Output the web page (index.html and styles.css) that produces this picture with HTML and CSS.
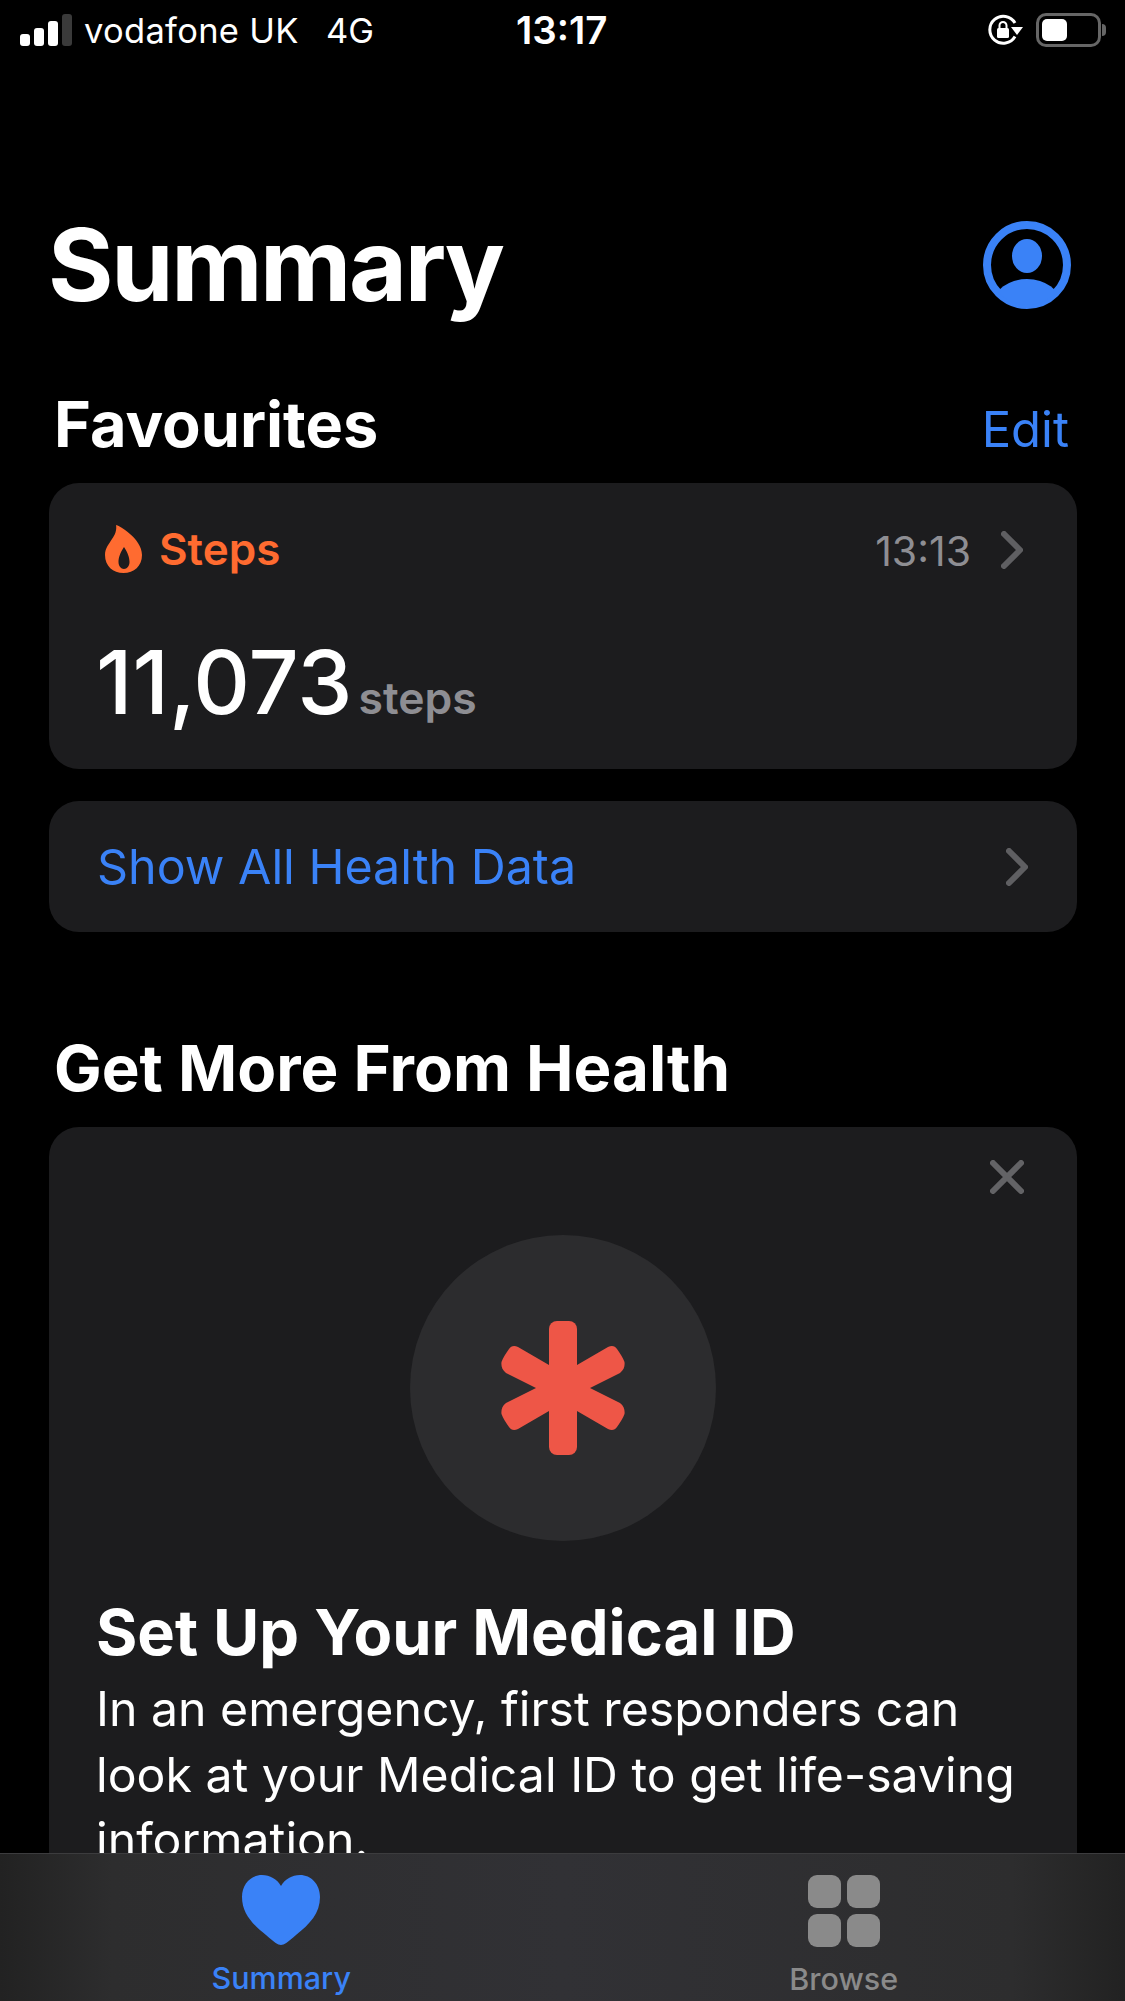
FILE: index.html
```html
<!DOCTYPE html>
<html lang="en">
<head>
  <meta charset="UTF-8" />
  <title>Summary</title>
  <link rel="stylesheet" href="styles.css">
</head>
<body>

<div class="screen">
  <div class="status">
    <div class="signal"><i></i><i></i><i></i><i class="off"></i></div>
    <span class="carrier">vodafone UK</span>
    <span class="network">4G</span>
    <span class="clock">13:17</span>
    <svg class="lock" width="36" height="34" viewBox="0 0 36 34">
      <path d="M27 23.5A13.5 13.5 0 1 1 27 10" fill="none" stroke="#fff" stroke-width="3"/>
      <path d="M23 14h12l-6 8z" fill="#fff"/>
      <rect x="9" y="15" width="12" height="10" rx="1.5" fill="#fff"/>
      <path d="M11.5 15v-2.5a3.5 3.5 0 0 1 7 0V15" fill="none" stroke="#fff" stroke-width="2"/>
    </svg>
    <div class="battery"><div class="level"></div></div>
    <div class="nub"></div>
  </div>

  <div class="content">
    <div class="title-row">
      <h1>Summary</h1>
      <svg width="88" height="88" viewBox="0 0 88 88">
        <defs><clipPath id="ring"><circle cx="44" cy="44" r="40"/></clipPath></defs>
        <circle cx="44" cy="44" r="40" fill="none" stroke="#3a82f7" stroke-width="8"/>
        <ellipse cx="44" cy="35" rx="15" ry="17" fill="#3a82f7"/>
        <ellipse cx="44" cy="84" rx="34" ry="26" fill="#3a82f7" clip-path="url(#ring)"/>
      </svg>
    </div>

    <div class="section-row">
      <h2>Favourites</h2>
      <span class="edit">Edit</span>
    </div>

    <div class="card steps-card">
      <div class="steps-head">
        <svg class="flame" width="37" height="48" viewBox="0 0 37 48">
          <path fill-rule="evenodd" fill="#ff6b30" d="M11 0C13 0 37 13 37 30C37 41 29 48 18.500 48C8 48 0 41 0 30C0 23 4 19 7 14C10 10 12 5 11 0ZM19 22C15 28 13.500 33 13.500 37C13.500 41 16 44 19 44C22 44 24.500 41 24.500 37C24.500 33 23 28 19 22Z"/>
        </svg>
        <span class="steps-name">Steps</span>
        <span class="steps-time">13:13</span>
        <svg class="chev" width="22" height="38" viewBox="0 0 22 38"><path d="M3 3L19 19L3 35"/></svg>
      </div>
      <div class="steps-value">11,073<span>steps</span></div>
    </div>

    <div class="card all-data">
      <span>Show All Health Data</span>
      <svg class="chev" width="22" height="38" viewBox="0 0 22 38"><path d="M3 3L19 19L3 35"/></svg>
    </div>

    <h2 class="more">Get More From Health</h2>

    <div class="card promo">
      <div class="promo-close">
        <svg width="34" height="34" viewBox="0 0 34 34"><path d="M3 3L31 31M31 3L3 31"/></svg>
      </div>
      <div class="promo-badge">
        <svg width="130" height="134" viewBox="0 0 130 134">
          <rect x="51" y="0" width="28" height="134" rx="8" fill="#ee5647"/>
          <path fill="#ee5647" d="M51 44L20 26C16 24 13 25 11 28C8 32 5 37 3.5 41C3 45 4 49 8 52L38 67L8 82C4 85 3 89 3.5 93C5 97 8 102 11 106C13 109 16 110 20 108L51 90H79L110 108C114 110 117 109 119 106C122 102 125 97 126.5 93C127 89 126 85 122 82L92 67L122 52C126 49 127 45 126.5 41C125 37 122 32 119 28C117 25 114 24 110 26L79 44Z"/>
        </svg>
      </div>
      <h3>Set Up Your Medical ID</h3>
      <p>In an emergency, first responders can look at your Medical ID to get life-saving information.</p>
    </div>
  </div>

  <div class="tabbar">
    <div class="tab active">
      <svg width="78" height="70" viewBox="0 0 78 70">
        <path fill="#3a82f7" d="M39 70C36 70 32 67 24 60C10 49 0 38 0 22C0 9 9 0 20 0C28 0 35 4 39 11C43 4 50 0 58 0C69 0 78 9 78 22C78 38 68 49 54 60C46 67 42 70 39 70Z"/>
      </svg>
      <span>Summary</span>
    </div>
    <div class="tab">
      <div class="tiles"><i></i><i></i><i></i><i></i></div>
      <span>Browse</span>
    </div>
  </div>
</div>

</body>
</html>
```

FILE: styles.css
```css
* {
  box-sizing: border-box;
}
body {
  margin: 0;
  background: #000;
  color: #fff;
  font-family: Inter, "Noto Sans", sans-serif;
}
.screen {
  width: 1125px;
  height: 2001px;
  display: flex;
  flex-direction: column;
  overflow: hidden;
}

/* status bar */
.status {
  height: 60px;
  flex: none;
  display: flex;
  align-items: center;
  padding-left: 20px;
  font-size: 34.5px;
}
.signal {
  display: flex;
  align-items: flex-end;
  gap: 4px;
  height: 32px;
  margin-right: 12px;
}
.signal i {
  width: 10px;
  background: #fff;
  border-radius: 3px;
  height: 12px;
}
.signal i:nth-child(2) { height: 18px; }
.signal i:nth-child(3) { height: 25px; }
.signal i.off { height: 32px; background: #3a3a3a; }
.carrier { width: 242px; letter-spacing: 0.3px; }
.network { width: 190px; }
.clock { width: 472px; font-weight: 600; font-size: 38.5px; }
.lock { margin-right: 12px; }
.battery {
  width: 65px;
  height: 34px;
  border: 3px solid #666;
  border-radius: 10px;
  padding: 3px;
}
.level {
  width: 25px;
  height: 22px;
  background: #fff;
  border-radius: 5px;
}
.nub {
  width: 4px;
  height: 12px;
  margin-left: 1px;
  background: #666;
  border-radius: 0 4px 4px 0;
}

.content {
  flex: 1;
  min-height: 0;
  overflow: hidden;
  padding: 0 48px 0 49px;
}
.title-row {
  display: flex;
  justify-content: space-between;
  align-items: center;
  margin-top: 150px;
  padding-right: 6px;
  height: 110px;
}
h1 {
  margin: 0 0 0 -1px;
  font-size: 100px;
  line-height: 110px;
  font-weight: 700;
  letter-spacing: -2.3px;
}
.section-row {
  display: flex;
  justify-content: space-between;
  align-items: baseline;
  margin-top: 66px;
  padding: 0 8px 0 5px;
}
h2 {
  margin: 0;
  font-size: 63px;
  line-height: 76px;
  font-weight: 700;
}
.edit {
  color: #3a82f7;
  font-size: 49px;
}
.card {
  background: #1c1c1e;
  border-radius: 30px;
}
.steps-card {
  height: 286px;
  margin-top: 21px;
  padding: 42px 54px 0 54px;
}
.steps-head {
  display: flex;
  align-items: center;
  height: 48px;
}
.flame {
  margin-left: 2px;
}
.steps-name {
  color: #ff6b30;
  font-size: 44px;
  font-weight: 600;
  margin-left: 17px;
  flex: 1;
}
.steps-time {
  color: #8e8e93;
  font-size: 41px;
  margin-right: 30px;
  padding-top: 3px;
}
.chev {
  fill: none;
  stroke: #5f5f62;
  stroke-width: 6;
  stroke-linecap: round;
  stroke-linejoin: round;
}
.steps-head .chev {
  margin-top: 2px;
}
.steps-value {
  margin: 59px 0 0 -7px;
  font-size: 88px;
  line-height: 100px;
  font-weight: 500;
}
.steps-value span {
  color: #8e8e93;
  font-size: 44.5px;
  font-weight: 600;
  margin-left: 6px;
}
.all-data {
  height: 131px;
  margin-top: 32px;
  padding: 0 49px 0 48px;
  display: flex;
  justify-content: space-between;
  align-items: center;
  color: #3a82f7;
  font-size: 48.4px;
}
.more {
  margin: 98px 0 0 5px;
  font-size: 63.6px;
}
.promo {
  margin-top: 21px;
  height: 800px;
  padding: 33px 48px 0 47px;
}
.promo-close {
  display: flex;
  justify-content: flex-end;
  padding-right: 5px;
}
.promo-close svg {
  fill: none;
  stroke: #636366;
  stroke-width: 6;
  stroke-linecap: round;
}
.promo-badge {
  width: 306px;
  height: 306px;
  margin: 41px auto 0;
  background: #2c2c2e;
  border-radius: 50%;
  display: flex;
  align-items: center;
  justify-content: center;
}
h3 {
  margin: 55px 0 0;
  font-size: 63.2px;
  line-height: 72px;
  font-weight: 700;
}
.promo p {
  margin: 8px 0 0;
  font-size: 48.2px;
  line-height: 65.5px;
}

/* tabs */
.tabbar {
  flex: none;
  height: 148px;
  display: flex;
  border-top: 1px solid #3c3c3e;
  background: linear-gradient(90deg, #222 0, #2d2d2e 10%, #313135 50%, #2d2d2e 90%, #222 100%);
}
.tab {
  flex: 1;
  display: flex;
  flex-direction: column;
  align-items: center;
  padding-top: 21px;
  color: #8a8a8a;
  font-size: 30.5px;
  font-weight: 500;
}
.tab.active { color: #3a82f7; }
.tab span {
  margin-top: 14px;
  line-height: 36px;
}
.tab.active span {
  margin-top: 15px;
}
.tiles {
  display: grid;
  grid-template-columns: 33px 33px;
  gap: 6px;
}
.tiles i {
  height: 33px;
  background: #8a8a8a;
  border-radius: 9px;
}
```
